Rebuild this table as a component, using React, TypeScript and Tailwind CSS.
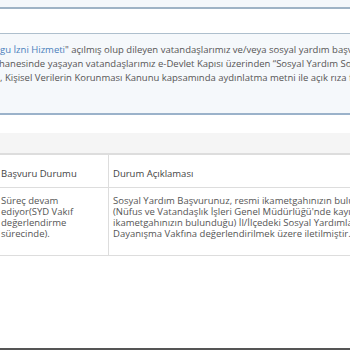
import React from "react";

export default function App() {
  return (
    <div className="w-[350px] h-[350px] overflow-hidden bg-white flex flex-col font-['Open_Sans',sans-serif] text-[#555]">
      <div className="h-[9px] shrink-0 bg-[#f4f7fa] border-b-2 border-[#9fb3c5]" />
      <div className="h-[24px] shrink-0" />
      <div className="h-[82px] shrink-0 bg-[#f5f8fb] border-t border-b-2 border-t-[#aebfcd] border-b-[#9bb2ca] pt-[9px] text-[9.5px] leading-[14px] whitespace-nowrap overflow-hidden">
        <div>
          <span className="text-[#4a80bb]">gu İzni Hizmeti</span>" açılmış olup dileyen vatandaşlarımız ve/veya sosyal yardım başvurusu
        </div>
        <div className="-ml-[1px]">hanesinde yaşayan vatandaşlarımız e-Devlet Kapısı üzerinden “Sosyal Yardım Sorgu</div>
        <div>, Kişisel Verilerin Korunması Kanunu kapsamında aydınlatma metni ile açık rıza formu</div>
      </div>
      <div className="h-[18px] shrink-0" />
      <div className="h-[22px] shrink-0 bg-[#f5f5f5] border-b-2 border-[#dddddd]" />
      <div className="flex -ml-[4px] text-[9.5px] text-[#555] border-b border-[#dddddd]">
        <div className="w-[113px] shrink-0 border-r border-[#dddddd] flex flex-col">
          <div className="h-[33px] border-b border-[#dddddd] pl-[5px] pt-[13px] leading-[11px] text-[#444]">Başvuru Durumu</div>
          <div className="h-[67px] pl-[5px] pr-[3px] pt-[7px] leading-[11px]">
            Süreç devam ediyor(SYD Vakıf değerlendirme sürecinde).
          </div>
        </div>
        <div className="flex-1 flex flex-col whitespace-nowrap overflow-hidden">
          <div className="h-[33px] border-b border-[#dddddd] pl-[4px] pt-[13px] leading-[11px] text-[#444]">Durum Açıklaması</div>
          <div className="h-[67px] pl-[4px] pt-[7px] leading-[11px]">
            <div>Sosyal Yardım Başvurunuz, resmi ikametgahınızın bulunduğu</div>
            <div>(Nüfus ve Vatandaşlık İşleri Genel Müdürlüğü'nde kayıtlı</div>
            <div>ikametgahınızın bulunduğu) İl/İlçedeki Sosyal Yardımlaşma ve</div>
            <div>Dayanışma Vakfına değerlendirilmek üzere iletilmiştir.</div>
          </div>
        </div>
      </div>
      <div className="flex-1" />
      <div className="h-[2px] shrink-0 bg-[#555]" />
    </div>
  );
}
